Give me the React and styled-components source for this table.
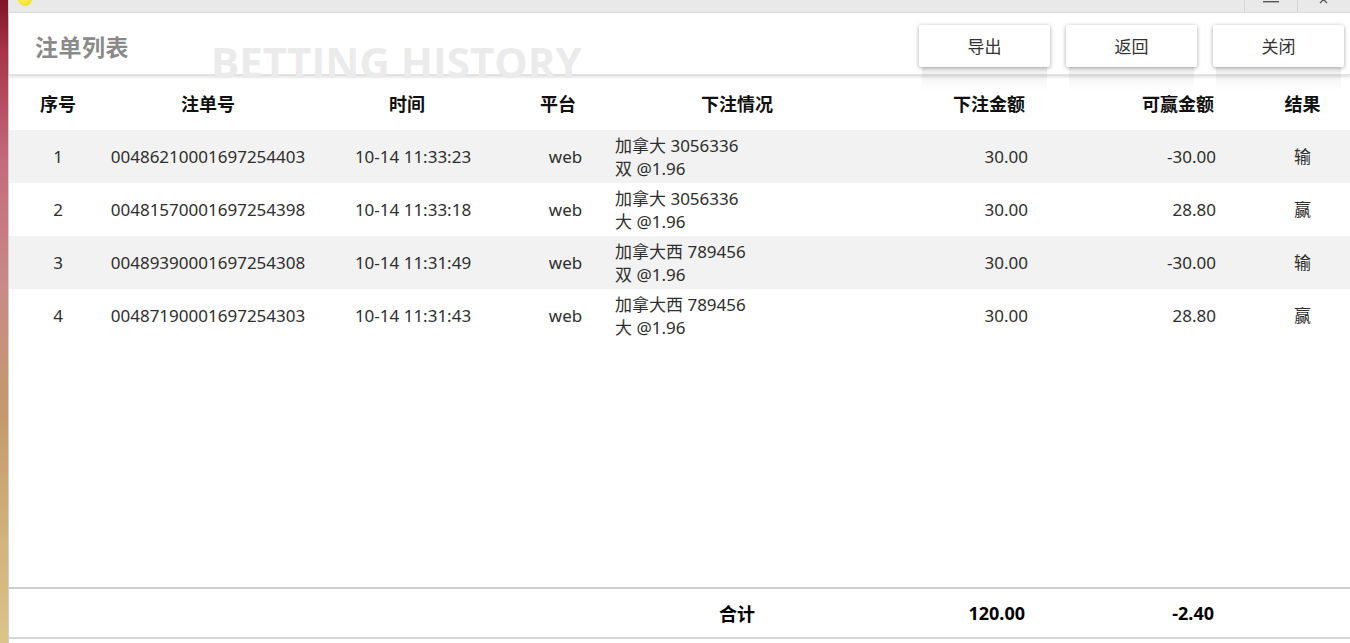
import React from 'react';
import styled, { createGlobalStyle } from 'styled-components';

const GlobalStyle = createGlobalStyle`
  html, body {
    margin: 0;
    padding: 0;
    background: #ffffff;
  }
  body {
    font-family: "Noto Sans", "Noto Sans CJK SC", sans-serif;
    color: #333333;
  }
`;

const columns = [
  { key: 'no', title: '序号', width: 98, align: 'center' },
  { key: 'id', title: '注单号', width: 202, align: 'center' },
  { key: 'time', title: '时间', width: 196, align: 'center', dataPad: '0 0 0 12px' },
  { key: 'platform', title: '平台', width: 106, align: 'center', dataPad: '0 0 0 15px' },
  { key: 'detail', title: '下注情况', width: 252, align: 'center', dataAlign: 'left', dataPad: '0 0 0 4px' },
  { key: 'amount', title: '下注金额', width: 172, align: 'right', headPad: '0 10px 0 0', dataPad: '0 7px 0 0' },
  { key: 'win', title: '可赢金额', width: 220, align: 'right', headPad: '0 41px 0 0', dataPad: '0 39px 0 0' },
  { key: 'result', title: '结果', width: 95, align: 'center' },
];

const gridCols = columns.map(c => `${c.width}px`).join(' ');

const bets = [
  { no: 1, id: '00486210001697254403', time: '10-14 11:33:23', platform: 'web', detail: ['加拿大 3056336', '双 @1.96'], amount: '30.00', win: '-30.00', result: '输' },
  { no: 2, id: '00481570001697254398', time: '10-14 11:33:18', platform: 'web', detail: ['加拿大 3056336', '大 @1.96'], amount: '30.00', win: '28.80', result: '赢' },
  { no: 3, id: '00489390001697254308', time: '10-14 11:31:49', platform: 'web', detail: ['加拿大西 789456', '双 @1.96'], amount: '30.00', win: '-30.00', result: '输' },
  { no: 4, id: '00487190001697254303', time: '10-14 11:31:43', platform: 'web', detail: ['加拿大西 789456', '大 @1.96'], amount: '30.00', win: '28.80', result: '赢' },
];

const Screen = styled.div`
  display: flex;
  height: 643px;
  overflow: hidden;
`;

const Backdrop = styled.div`
  width: 8px;
  flex-shrink: 0;
  background: linear-gradient(
    180deg,
    #7e1424 0%,
    #a83448 8%,
    #c46a7a 25%,
    #c98a86 45%,
    #c49a6c 65%,
    #d2b47c 85%,
    #dcc488 100%
  );
`;

const Window = styled.div`
  flex: 1;
  display: flex;
  flex-direction: column;
  border-left: 1px solid #c6d0da;
  background: #ffffff;
  min-width: 0;
`;

const TitleBar = styled.div`
  height: 12px;
  flex-shrink: 0;
  display: flex;
  align-items: flex-start;
  background: #e9e9e9;
  border-bottom: 1px solid #dadada;
  overflow: hidden;
  padding-left: 9px;
`;

const AppIcon = styled.span`
  width: 14px;
  height: 14px;
  margin-top: -8px;
  border-radius: 50%;
  background: radial-gradient(circle at 40% 40%, #fff46a, #f2d800);
`;

const TitleSpacer = styled.div`
  flex: 1;
`;

const WinButton = styled.span`
  width: 52px;
  height: 12px;
  display: flex;
  justify-content: center;
  align-items: flex-start;
  border-left: 1px solid #d4d4d4;
`;

const MinimizeIcon = () => (
  <svg width="16" height="4" viewBox="0 0 16 4">
    <rect x="0" y="1" width="16" height="1.4" fill="#555" />
  </svg>
);

const CloseIcon = () => (
  <svg width="14" height="6" viewBox="0 0 14 6">
    <path d="M3 -4 L10 3 M10 -4 L3 3" stroke="#555" strokeWidth="1.3" fill="none" />
  </svg>
);

const Panel = styled.div`
  flex: 1;
  display: flex;
  flex-direction: column;
  padding-top: 2px;
  min-height: 0;
`;

const Header = styled.div`
  position: relative;
  height: 60px;
  flex-shrink: 0;
  display: flex;
  align-items: center;
  padding: 2px 6px 0 26px;
  box-sizing: border-box;
  background: #ffffff;
  box-shadow: 0 2px 3px rgba(0, 0, 0, 0.14);
  border-bottom: 1px solid #e2e2e2;
`;

const Title = styled.h1`
  margin: 0;
  font-size: 23px;
  font-weight: 700;
  color: #8a8a8a;
  letter-spacing: 0.5px;
`;

const Watermark = styled.div`
  position: absolute;
  left: 202px;
  top: 26px;
  font-family: "Open Sans", "Noto Sans", sans-serif;
  font-size: 42px;
  line-height: 42px;
  font-weight: 700;
  color: #ebebeb;
  white-space: nowrap;
  pointer-events: none;
`;

const Spacer = styled.div`
  flex: 1;
`;

const Actions = styled.div`
  position: relative;
  z-index: 1;
  display: flex;
  gap: 16px;
`;

const ActionButton = styled.button`
  position: relative;
  width: 131px;
  height: 42px;
  border: none;
  border-radius: 2px;
  background: #ffffff;
  color: #333333;
  font-family: "Noto Sans CJK SC", "Noto Sans", sans-serif;
  font-size: 17px;
  box-shadow: 0 1px 4px rgba(0, 0, 0, 0.35);
  cursor: pointer;

  &::after {
    content: '';
    position: absolute;
    left: 3px;
    right: 3px;
    top: 100%;
    height: 24px;
    background: linear-gradient(180deg, rgba(0, 0, 0, 0.07), rgba(0, 0, 0, 0));
  }
`;

const Row = styled.div`
  display: grid;
  grid-template-columns: ${gridCols};
  height: ${p => p.$height || 53}px;
  align-items: center;
  background: ${p => (p.$striped ? '#f2f2f2' : '#ffffff')};
`;

const HeadRow = styled(Row)`
  margin-top: 1px;
`;

const HeadCell = styled.div`
  text-align: ${p => p.$align};
  padding: ${p => p.$pad || '0'};
  font-size: 18px;
  font-weight: 700;
  color: #111111;
`;

const Cell = styled.div`
  text-align: ${p => p.$align};
  padding: ${p => p.$pad || '0'};
  font-size: 17px;
  line-height: 23px;
  color: #2e2e2e;
  white-space: nowrap;
`;

const Body = styled.div`
  flex: 1;
`;

const TotalRow = styled(Row)`
  border-top: 2px solid #cdcdcd;
  border-bottom: 2px solid #d6d6d6;
  margin-bottom: 4px;
`;

const TotalCell = styled(HeadCell)`
  font-size: 18px;
  color: #000000;
`;

const renderValue = (bet, key) => {
  if (key === 'detail') {
    return bet.detail.map(line => <div key={line}>{line}</div>);
  }
  return bet[key];
};

const App = () => {
  const totals = { detail: '合计', amount: '120.00', win: '-2.40' };

  return (
    <Screen>
      <GlobalStyle />
      <Backdrop />
      <Window>
        <TitleBar>
          <AppIcon />
          <TitleSpacer />
          <WinButton>
            <MinimizeIcon />
          </WinButton>
          <WinButton>
            <CloseIcon />
          </WinButton>
        </TitleBar>
        <Panel>
          <Header>
            <Title>注单列表</Title>
            <Watermark>BETTING HISTORY</Watermark>
            <Spacer />
            <Actions>
              <ActionButton>导出</ActionButton>
              <ActionButton>返回</ActionButton>
              <ActionButton>关闭</ActionButton>
            </Actions>
          </Header>

          <HeadRow $height={54}>
            {columns.map(c => (
              <HeadCell key={c.key} $align={c.align} $pad={c.headPad}>
                {c.title}
              </HeadCell>
            ))}
          </HeadRow>

          <Body>
            {bets.map((bet, i) => (
              <Row key={bet.id} $striped={i % 2 === 0}>
                {columns.map(c => (
                  <Cell key={c.key} $align={c.dataAlign || c.align} $pad={c.dataPad}>
                    {renderValue(bet, c.key)}
                  </Cell>
                ))}
              </Row>
            ))}
          </Body>

          <TotalRow $height={48}>
            {columns.map(c => (
              <TotalCell key={c.key} $align={c.align} $pad={c.headPad}>
                {totals[c.key] || ''}
              </TotalCell>
            ))}
          </TotalRow>
        </Panel>
      </Window>
    </Screen>
  );
};

export default App;
